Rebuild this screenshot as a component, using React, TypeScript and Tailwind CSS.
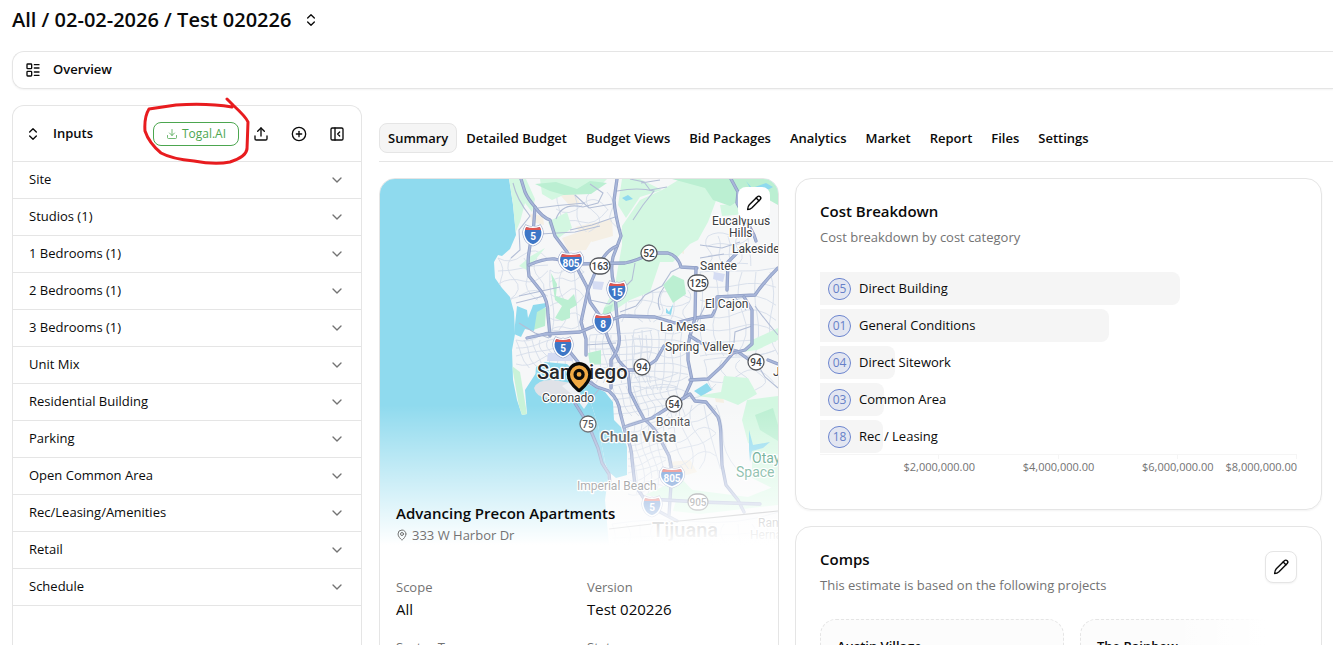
import { useState } from "react";
import {
  ChevronDown,
  ChevronsUpDown,
  CirclePlus,
  Download,
  LayoutList,
  MapPin,
  PanelLeftClose,
  Upload,
} from "lucide-react";
import { clsx } from "clsx";

const INPUT_SECTIONS = [
  "Site",
  "Studios (1)",
  "1 Bedrooms (1)",
  "2 Bedrooms (1)",
  "3 Bedrooms (1)",
  "Unit Mix",
  "Residential Building",
  "Parking",
  "Open Common Area",
  "Rec/Leasing/Amenities",
  "Retail",
  "Schedule",
];

const TABS = [
  "Summary",
  "Detailed Budget",
  "Budget Views",
  "Bid Packages",
  "Analytics",
  "Market",
  "Report",
  "Files",
  "Settings",
];

const AXIS_MAX = 8_000_000;

const COSTS = [
  { code: "05", label: "Direct Building", amount: 6_045_000 },
  { code: "01", label: "General Conditions", amount: 4_850_000 },
  { code: "04", label: "Direct Sitework", amount: 1_255_000 },
  { code: "03", label: "Common Area", amount: 1_075_000 },
  { code: "18", label: "Rec / Leasing", amount: 1_055_000 },
];

const DETAILS = [
  { label: "Scope", value: "All" },
  { label: "Version", value: "Test 020226" },
  { label: "Sector Type", value: "" },
  { label: "Status", value: "" },
];

const COMPS = ["Austin Village", "The Rainbow"];

function PencilIcon() {
  return (
    <svg
      viewBox="0 0 16 16"
      className="h-4 w-4"
      fill="none"
      stroke="currentColor"
      strokeWidth="1.4"
      strokeLinecap="round"
      strokeLinejoin="round"
      aria-hidden
    >
      <path d="M11.4 1.7a1.8 1.8 0 0 1 2.8 2.8L6 12.7C4.9 13.7 3.4 14.4 1.6 14.5 1.7 12.6 2.3 10.9 3.3 9.8z" />
      <path d="m10.2 3 2.7 2.7" />
    </svg>
  );
}

// --- Map -------------------------------------------------------------------

const HIGHWAYS = [
  // I-5
  "M521 179L525 192Q528 199 535 207L533 235Q526 255 529 276L541 291Q548 300 548 315L550 336M557 345L570 352 578 362 586 380 597 387 609 391Q619 400 620 412L626 435Q632 448 632 460L635 485 645 500 660 512 677 521",
  // I-805
  "M535 207Q542 217 550 220L555 236 567 252 577 268 587 287 590 302 600 316 609 341 619 361 628 371 630 392 638 408 644 419Q655 428 659 437L669 456Q673 470 671 485L669 515",
  // I-15
  "M617 179L614 200Q615 215 621 236L613 257Q610 270 614 285L617 318 619 335Q621 348 611 360V388",
  // 163
  "M617 246Q606 250 597 268L588 290 581 322 586 339 586 355",
  // I-8
  "M527 338L545 334 580 332 597 325 622 316 655 317 675 323 695 318 712 316Q717 308 717 297L755 295Q763 283 778 268",
  // 52
  "M529 265Q545 258 555 259L575 264 625 263Q640 260 650 253L668 253Q678 256 681 267L697 268",
  // 125
  "M696 268L695 318 690 336 688 346 688 360 692 380 684 398",
  // 94
  "M619 370L642 370 656 360 664 346M690 336L701 343 737 351 748 359 758 366M768 360L778 364",
  // 54
  "M624 427L652 418 682 399 690 394 695 401 706 402 718 417Q721 424 721 440L722 465 726 485 738 500 744 512",
  "M690 380L708 379 722 366 733 353 745 350 752 344 752 310 744 297",
  "M731 179L738 192 737 203 754 235 756 241M740 250L728 262 727 290",
  "M648 499L700 502 760 504",
  "M573 400L588 424 598 448 602 463 609 474 610 484",
];

const MINOR_HIGHWAYS = [
  "M513 183Q517 200 530 216L519 230 520 250 511 258",
  "M538 208Q560 205 585 203M556 219Q562 202 583 207L598 203 603 193 590 184",
  "M540 234L575 232 600 226",
  "M575 195L589 208 612 204M570 230L592 225 615 217",
  "M630 179L644 182 650 190 667 187M641 183L660 180",
  "M617 191Q638 187 654 191L643 205 633 220",
  "M620 312L636 306 645 295 662 286 671 272 681 267",
  "M660 310Q655 299 664 287",
  "M519 296L560 287M516 303L544 296M519 323L535 333 549 338",
  "M590 300L609 304 617 297M585 345L616 343",
  "M635 263L632 280 622 290",
  "M700 245L722 248 740 242M700 258L724 254",
  "M717 297L705 306 697 322M735 297L746 310M733 353L735 332 752 326",
  "M778 335Q765 320 755 306M778 388L765 377 758 365",
  "M597 387L590 379M600 388L590 400",
];

const PARKS_LIGHT = [
  "M509 179H526L535 199 532 212 525 203 520 222 514 236 513 205z",
  "M540 179H607L598 188 575 190 552 200 542 194z",
  "M548 222L567 212 572 228 556 240z",
  "M622 179H640L662 190 640 197 626 218 618 205z",
  "M662 190L680 179H720V190L708 222 698 240 690 244 673 262 660 262 650 292 630 300 612 312 604 308 614 290 622 245 622 226 640 200z",
  "M720 205L736 204 748 214 722 216z",
  "M545 248L527 270 519 266 531 256z",
  "M742 352L752 340 778 328V340L757 350z",
  "M742 420L747 400 778 396V456L748 443z",
  "M673 511Q680 482 693 490L748 497 778 485V505L700 514z",
  "M645 495L681 478 694 492 673 500z",
  "M696 396L721 392 724 376 748 378 757 394 738 405 723 399z",
  "M752 440L778 435V491L752 478z",
];

const PARKS_DARK = [
  "M551 273L557 284 556 296 568 300 574 294 577 305 570 309 570 318 562 321 555 318 562 306 555 300z",
  "M535 184L556 182 577 189 590 181 607 183 591 194 564 195 550 191z",
  "M672 179H778V205L760 195 741 200 730 206 713 200 705 188z",
  "M663 285L673 275 684 280 686 294 673 303z",
  "M755 415L773 408 778 425V441L760 430z",
  "M532 309L546 308 545 326 530 331z",
  "M588 353L601 350 601 364 590 365z",
  "M604 308L613 304 610 316 602 316z",
];

const SANDS = [
  "M560 195L573 190 580 203 570 206z",
  "M530 214L543 216 544 225 532 222z",
  "M562 238L590 228 592 240 586 250 568 251z",
  "M575 227L612 219 613 236 592 242z",
  "M673 244L684 236 684 254 675 250z",
  "M740 205L760 200 752 222 740 214z",
  "M668 462L690 460 697 472 676 478z",
  "M714 395L723 392 724 403 716 402z",
];

const WATER = [
  "M517 306L527 310 528 318 532 308 533 305 546 303V307L537 312 534 331 525 329 521 337 514 334z",
  "M536 367L545 362 567 364 588 384 605 392 613 402 614 420 621 427 627 447 627 475 616 478 609 472 604 461 598 436 588 414 575 401 563 398 542 401 534 394z",
  "M746 181L752 188 766 183 773 187 764 192 752 191z",
  "M694 391L707 383 712 390 701 396z",
  "M749 430L753 445 770 442 763 448 752 451 750 462 749 450z",
  "M666 308L669 312 673 304 671 315 666 313z",
  "M622 198L628 195 633 199 626 201z",
];

// Residential streets: rows of gently bent lines, the seed keeps them uneven.
function streets(x: number, y: number, w: number, h: number, step: number, lean: number) {
  const parts: string[] = [];
  for (let i = 0; i <= w; i += step) {
    const sway = Math.sin(i * 1.7 + x) * step * 0.6;
    parts.push(
      `M${x + i} ${y}q${sway} ${h * 0.25} ${lean * 0.5} ${h * 0.5}t${lean * 0.5 + sway} ${h * 0.5}`,
    );
  }
  for (let j = 0; j <= h; j += step) {
    const sway = Math.cos(j * 1.3 + y) * step * 0.6;
    parts.push(
      `M${x} ${y + j}q${w * 0.25} ${sway} ${w * 0.5} ${-lean * 0.5}t${w * 0.5} ${-lean * 0.5 + sway}`,
    );
  }
  return parts.join("");
}

const STREETS = [
  streets(498, 258, 50, 42, 13, 6),
  streets(516, 340, 50, 28, 8, 10),
  streets(550, 270, 34, 60, 12, 4),
  streets(590, 335, 62, 48, 7, 3),
  streets(634, 330, 54, 60, 8, -3),
  streets(612, 386, 66, 30, 7, 9),
  streets(628, 424, 38, 70, 7, 10),
  streets(668, 405, 48, 64, 12, 14),
  streets(700, 272, 76, 84, 14, 2),
  streets(708, 236, 40, 30, 10, 3),
  streets(628, 290, 62, 32, 12, -4),
  streets(612, 524, 166, 40, 14, 5),
  streets(556, 192, 52, 40, 17, 8),
  streets(704, 360, 70, 30, 18, 6),
];

type Place = { text: string; x: number; y: number; size?: number; weight?: number; fill?: string };

const PLACES: Place[] = [
  { text: "Eucalyptus", x: 712, y: 225 },
  { text: "Hills", x: 729, y: 237 },
  { text: "Lakeside", x: 732, y: 253 },
  { text: "Santee", x: 700, y: 270 },
  { text: "El Cajon", x: 705, y: 308 },
  { text: "La Mesa", x: 660, y: 331 },
  { text: "Spring Valley", x: 665, y: 351 },
  { text: "San Diego", x: 537, y: 379, size: 20, weight: 500, fill: "#28292c" },
  { text: "Coronado", x: 542, y: 402 },
  { text: "Bonita", x: 656, y: 426 },
  { text: "Chula Vista", x: 600, y: 442, size: 15, weight: 500 },
  { text: "Imperial Beach", x: 577, y: 490 },
  { text: "Tijuana", x: 652, y: 537, size: 20, weight: 500 },
  { text: "Otay", x: 752, y: 463, size: 14, fill: "#2b8a68" },
  { text: "Space", x: 736, y: 477, size: 14, fill: "#2b8a68" },
  { text: "Ran", x: 758, y: 527 },
  { text: "Herna", x: 750, y: 539 },
  { text: "J", x: 773, y: 376 },
];

const INTERSTATES = [
  { no: "5", x: 533, y: 235 },
  { no: "805", x: 571, y: 262 },
  { no: "15", x: 617, y: 291 },
  { no: "8", x: 603, y: 323 },
  { no: "5", x: 563, y: 347 },
  { no: "805", x: 672, y: 477 },
  { no: "5", x: 652, y: 506 },
];

const STATE_ROUTES = [
  { no: "52", x: 649, y: 253 },
  { no: "163", x: 600, y: 266 },
  { no: "125", x: 698, y: 283 },
  { no: "94", x: 642, y: 367 },
  { no: "94", x: 756, y: 362 },
  { no: "54", x: 674, y: 404 },
  { no: "75", x: 588, y: 424 },
  { no: "905", x: 698, y: 502 },
];

function SiteMap() {
  return (
    <svg
      viewBox="380 179 398 366"
      preserveAspectRatio="xMidYMin slice"
      className="block h-[366px] w-full font-['Roboto',sans-serif]"
      role="img"
      aria-label="Map of San Diego"
    >
      <defs>
        <linearGradient id="map-fade" x1="0" y1="0" x2="0" y2="1">
          <stop offset="0" stopColor="#fff" stopOpacity="0" />
          <stop offset="1" stopColor="#fff" />
        </linearGradient>
        <clipPath id="land">
          <path d="M509 179L513 205 516 235 510 249 502 256 498 255 494 262 495 278 502 288 510 297 514 312 515 334 512 350 513 380 517 400 522 415 527 414 525 390 536 373 550 368 575 372 590 400 598 425 608 478 605 500 609 545H778V179z" />
        </clipPath>
      </defs>
      <rect x="380" y="179" width="398" height="366" fill="#8fdaee" />
      <g clipPath="url(#land)">
        <rect x="480" y="179" width="298" height="366" fill="#f6f7f8" />
        {SANDS.map((d) => (
          <path key={d} d={d} fill="#f5efe4" />
        ))}
        {STREETS.map((d) => (
          <path key={d} d={d} fill="none" stroke="#d6deea" strokeWidth="0.9" />
        ))}
        {PARKS_LIGHT.map((d) => (
          <path key={d} d={d} fill="#d3f7e1" />
        ))}
        {PARKS_DARK.map((d) => (
          <path key={d} d={d} fill="#bbefd2" />
        ))}
        <path d="M512 366L520 372 527 414 521 418z" fill="#c9f3d8" />
        <path
          d="M548 353L572 352 573 361 547 361zM592 281L604 282 602 290 593 289zM714 272L725 274 723 282 713 279z"
          fill="#d5dcf3"
        />
        {WATER.map((d) => (
          <path key={d} d={d} fill="#8fdaee" />
        ))}
      </g>
      <path d="M534 388Q538 379 553 380L572 383 580 392 582 402 570 400 547 398Q536 397 534 388z" fill="#dfe2e8" />
      <path d="M562 386L570 382 588 403 584 409 576 398z" fill="#eef0f4" />
      {MINOR_HIGHWAYS.map((d) => (
        <path key={d} d={d} fill="none" stroke="#b3bed6" strokeWidth="1.1" />
      ))}
      {HIGHWAYS.map((d) => (
        <g key={d} fill="none" strokeLinejoin="round" strokeLinecap="round">
          <path d={d} stroke="#8e9dc4" strokeWidth="3.3" />
          <path d={d} stroke="#a8b6d9" strokeWidth="1.8" />
        </g>
      ))}
      <path d="M609 529L660 523 778 511" fill="none" stroke="#6f7276" strokeWidth="1.2" />
      {INTERSTATES.map(({ no, x, y }) => {
        const wide = no.length > 2;
        const shield = wide
          ? "M-9-9Q-5-7 0-8 5-7 9-9 14-3 10 3 7 8 0 10-7 8-10 3-14-3-9-9z"
          : "M-7-9Q-3-7 0-8 3-7 7-9 11-3 8 3 6 8 0 10-6 8-8 3-11-3-7-9z";
        return (
          <g key={`${no}-${x}`} transform={`translate(${x} ${y})`}>
            <path d={shield} fill="#fff" stroke="#8e9dc4" strokeWidth="2.6" />
            <path d={shield} fill="#3d76c6" stroke="#fff" strokeWidth="1.6" />
            <path d={wide ? "M-9-8Q0-6 9-8L10-5H-10z" : "M-7-8Q0-6 7-8L8-5H-8z"} fill="#df5752" />
            <text y="5" textAnchor="middle" fontSize="10" fontWeight="700" fill="#fff">
              {no}
            </text>
          </g>
        );
      })}
      {STATE_ROUTES.map(({ no, x, y }) => {
        const half = no.length > 2 ? 10 : 8;
        return (
          <g key={`${no}-${x}`} transform={`translate(${x} ${y})`}>
            <rect x={-half} y="-8" width={half * 2} height="16" rx="8" fill="#fff" stroke="#55585d" strokeWidth="1.3" />
            <text y="4" textAnchor="middle" fontSize="10" fontWeight="500" fill="#3c4043">
              {no}
            </text>
          </g>
        );
      })}
      {PLACES.map(({ text, x, y, size = 12, weight = 400, fill = "#3c4043" }) => (
        <text
          key={text}
          x={x}
          y={y}
          fontSize={size}
          fontWeight={weight}
          fill={fill}
          stroke="#fff"
          strokeWidth="2.4"
          strokeLinejoin="round"
          paintOrder="stroke"
        >
          {text}
        </text>
      ))}
      <g transform="translate(563 361) scale(1.34)" stroke="#0a0a0a" strokeWidth="2.4">
        <path
          d="M20 10c0 4.993-5.539 10.193-7.399 11.799a1 1 0 0 1-1.202 0C9.539 20.193 4 14.993 4 10a8 8 0 0 1 16 0"
          fill="#f1a944"
        />
        <circle cx="12" cy="10" r="3" fill="#f1a944" />
      </g>
      <rect x="380" y="405" width="398" height="140" fill="url(#map-fade)" />
    </svg>
  );
}

// --- Page pieces -----------------------------------------------------------

function EditButton({ label, className }: { label: string; className?: string }) {
  return (
    <button
      type="button"
      aria-label={label}
      className={clsx(
        "grid h-8 w-8 shrink-0 place-items-center rounded-lg bg-white text-neutral-950",
        className,
      )}
    >
      <PencilIcon />
    </button>
  );
}

function IconButton({ label, children }: { label: string; children: React.ReactNode }) {
  return (
    <button type="button" aria-label={label} className="grid h-8 w-[38px] place-items-center">
      {children}
    </button>
  );
}

function InputsPanel() {
  return (
    <aside className="w-[350px] shrink-0 rounded-t-xl border border-b-0 border-neutral-200">
      <div className="flex h-14 items-center border-b border-neutral-200 pl-3 pr-[5px]">
        <ChevronsUpDown className="h-4 w-4" aria-hidden />
        <h2 className="ml-3 flex-1 text-[13px] font-semibold">Inputs</h2>
        <div className="relative mr-[3px]">
          <button
            type="button"
            className="flex h-6 w-[86px] items-center justify-center gap-1 rounded-lg border border-[#4ca64f] text-[12px] font-medium text-[#4ca64f]"
          >
            <Download className="h-3 w-3" strokeWidth={1.6} aria-hidden />
            Togal.AI
          </button>
          {/* hand-drawn ring around the import button */}
          <svg
            viewBox="143 96 107 70"
            className="pointer-events-none absolute -left-[10px] -top-[26px] h-[70px] w-[107px] max-w-none"
            fill="none"
            stroke="#e81c1f"
            strokeWidth="3"
            strokeLinecap="round"
            strokeLinejoin="round"
            aria-hidden
          >
            <path d="M232 107Q208 103 176 105L149 109Q144 117 145 131 149 143 161 153 172 159 194 161 215 165 230 162 246 157 247 149L248 122Q246 117 233 105L227 99" />
          </svg>
        </div>
        <IconButton label="Upload">
          <Upload className="h-4 w-4" />
        </IconButton>
        <IconButton label="Add input">
          <CirclePlus className="h-4 w-4" />
        </IconButton>
        <IconButton label="Collapse panel">
          <PanelLeftClose className="h-4 w-4" />
        </IconButton>
      </div>
      {INPUT_SECTIONS.map((name) => (
        <button
          key={name}
          type="button"
          className="flex h-[37px] w-full items-center justify-between border-b border-neutral-200 px-4 text-left text-[13px]"
        >
          {name}
          <ChevronDown className="h-4 w-4 text-neutral-500" aria-hidden />
        </button>
      ))}
    </aside>
  );
}

function ProjectCard() {
  return (
    <section className="relative overflow-hidden rounded-t-2xl border border-neutral-200 bg-white">
      <SiteMap />
      <EditButton label="Edit project" className="absolute right-2 top-2" />
      <div className="relative -mt-11 px-4">
        <h2 className="text-[15px] leading-6 font-semibold">Advancing Precon Apartments</h2>
        <p className="flex items-center gap-1 text-[13px] leading-5 text-neutral-500">
          <MapPin className="h-3 w-3" aria-hidden />
          333 W Harbor Dr
        </p>
      </div>
      <dl className="mt-8 grid grid-cols-2 gap-4 px-4">
        {DETAILS.map(({ label, value }) => (
          <div key={label}>
            <dt className="text-[13px] leading-5 text-neutral-500">{label}</dt>
            <dd className="text-[15px] leading-6">{value}</dd>
          </div>
        ))}
      </dl>
    </section>
  );
}

function CostCard() {
  return (
    <section className="h-[332px] rounded-2xl border border-neutral-200 px-6 pt-5 shadow-xs">
      <h2 className="text-[15px] leading-6 font-semibold">Cost Breakdown</h2>
      <p className="mt-1 text-[13px] leading-5 text-neutral-500">Cost breakdown by cost category</p>
      <div className="mt-[25px] flex flex-col gap-1">
        {COSTS.map(({ code, label, amount }) => (
          <div key={code} className="relative flex h-[33px] items-center">
            <div
              className="absolute inset-y-0 left-0 rounded-r-lg bg-neutral-100"
              style={{ width: `${(amount / AXIS_MAX) * 100}%` }}
            />
            <span className="relative ml-2 grid h-[22px] w-[23px] place-items-center rounded-full border border-[#6d86cf] bg-[#e3e6f1] text-[12px] text-[#6680c8]">
              {code}
            </span>
            <span className="relative ml-2 text-[13px]">{label}</span>
          </div>
        ))}
      </div>
      <div className="mt-px grid grid-cols-4 border-t border-neutral-100 text-[11px] leading-4 text-neutral-500">
        {[2, 4, 6, 8].map((m) => (
          <div key={m} className="flex flex-col items-end">
            <span className="h-1 border-l border-neutral-100" />
            <span className={clsx(m < 8 && "translate-x-1/2")}>${m},000,000.00</span>
          </div>
        ))}
      </div>
    </section>
  );
}

function CompsCard() {
  return (
    <section className="rounded-t-2xl border border-neutral-200 px-6 pt-5">
      <div className="flex items-start justify-between">
        <div>
          <h2 className="text-[15px] leading-6 font-semibold">Comps</h2>
          <p className="mt-1 text-[13px] leading-5 text-neutral-500">
            This estimate is based on the following projects
          </p>
        </div>
        <EditButton label="Edit comps" className="mt-1 border border-neutral-200 shadow-xs" />
      </div>
      <div className="relative mt-6 flex gap-4 overflow-hidden">
        {COMPS.map((name) => (
          <article
            key={name}
            className="h-[120px] w-[244px] shrink-0 rounded-2xl border border-dashed border-neutral-200 bg-neutral-50/50 px-4 pt-4"
          >
            <h3 className="text-[13px] leading-5 font-semibold">{name}</h3>
          </article>
        ))}
        <div className="absolute inset-y-0 right-0 w-32 bg-linear-to-r from-transparent to-white to-75%" />
      </div>
    </section>
  );
}

export default function App() {
  const [tab, setTab] = useState("Summary");

  return (
    <div className="flex h-screen flex-col overflow-hidden bg-white pl-3 font-['Open_Sans',sans-serif] text-neutral-950">
      <header className="flex h-[51px] shrink-0 items-start pt-[6px]">
        <h1 className="text-[20px] leading-7 font-semibold">All / 02-02-2026 / Test 020226</h1>
        <button type="button" aria-label="Switch estimate" className="ml-3 grid h-7 w-4 place-items-center">
          <ChevronsUpDown className="h-4 w-4" />
        </button>
      </header>

      <div className="flex h-[38px] shrink-0 items-center gap-3 rounded-l-xl border border-r-0 border-neutral-200 px-3 shadow-xs">
        <LayoutList className="h-4 w-4" aria-hidden />
        <span className="text-[13px] font-semibold">Overview</span>
      </div>

      <div className="mt-4 flex min-h-0 flex-1">
        <InputsPanel />
        <main className="ml-[17px] min-w-0 flex-1">
          <nav className="flex h-[57px] items-end gap-[15px] border-b border-neutral-200 pb-2">
            {TABS.map((name) => (
              <button
                key={name}
                type="button"
                onClick={() => setTab(name)}
                className={clsx(
                  "h-[30px] whitespace-nowrap pt-0.5 text-[13px] font-semibold",
                  tab === name && "-mr-1.5 rounded-lg border border-neutral-200 bg-neutral-100 px-2",
                  tab !== name && "pr-1",
                )}
              >
                {name}
              </button>
            ))}
          </nav>
          <div className="mt-4 grid grid-cols-[minmax(320px,400px)_1fr] items-start gap-4 pr-[11px]">
            <ProjectCard />
            <div className="flex min-w-0 flex-col gap-4">
              <CostCard />
              <CompsCard />
            </div>
          </div>
        </main>
      </div>
    </div>
  );
}
